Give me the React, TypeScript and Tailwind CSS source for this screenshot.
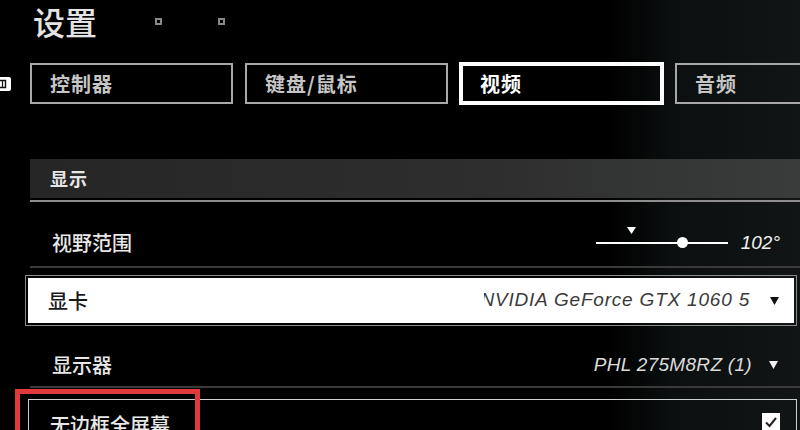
export default function App() {
  return (
    <div className="relative w-[800px] h-[430px] overflow-hidden bg-[linear-gradient(90deg,#000_0%,#000_76%,#0b0f0f_84%,#111515_100%)] text-[#e8e8e8] font-['Noto_Sans_CJK_SC','Liberation_Sans',sans-serif]">
      {/* Title */}
      <div className="h-[42px] flex items-center pl-[33px]">
        <div className="text-[32px] leading-none font-medium text-[#e4e4e4]">设置</div>
        <div className="ml-[58px] w-[7px] h-[7px] border-2 border-[#8a8a8a]" />
        <div className="ml-[56px] w-[7px] h-[7px] border-2 border-[#8a8a8a]" />
      </div>

      {/* Tabs */}
      <div className="mt-[21px] h-[41px] flex items-center">
        <div className="w-[11px] h-[14px] shrink-0 bg-white rounded-r-[2px] flex items-center overflow-hidden">
          <svg width="11" height="14" viewBox="0 0 11 14">
            <path d="M0 3.5 H5.5 V10.5 H0" fill="none" stroke="#111" strokeWidth="1.4" />
            <path d="M2.5 3.5 V10.5" stroke="#111" strokeWidth="1.2" />
          </svg>
        </div>
        <div className="ml-[19px] flex shrink-0 gap-[12px]">
          <div className="w-[203px] h-[41px] shrink-0 border-2 border-[#a8a8a8] flex items-center pl-[18px] text-[20px] font-bold text-[#c6c6c6] tracking-[1px]">控制器</div>
          <div className="w-[203px] h-[41px] shrink-0 border-2 border-[#a8a8a8] flex items-center pl-[18px] text-[20px] font-bold text-[#c6c6c6] tracking-[1px]">键盘/鼠标</div>
          <div className="w-[203px] h-[41px] shrink-0 border-[3px] border-white outline outline-1 outline-white flex items-center pl-[17px] text-[20px] font-bold text-white tracking-[1px]">视频</div>
          <div className="w-[203px] h-[41px] shrink-0 border-2 border-[#a8a8a8] flex items-center pl-[18px] text-[20px] font-bold text-[#c6c6c6] tracking-[1px]">音频</div>
        </div>
      </div>

      {/* Section */}
      <div className="mt-[55px] ml-[30px] w-[770px]">
        <div className="h-[39px] bg-[linear-gradient(90deg,#262626_0%,#2e2e2e_60%,#3a3c3c_100%)] flex items-center pl-[20px] text-[18px] font-bold tracking-[1px] text-[#e6e6e6]">显示</div>
        <div className="mt-[2px] h-[2px] bg-[#8e8e8e]" />

        {/* FOV */}
        <div className="h-[66px] pt-[18px] flex items-center justify-between pl-[22px] pr-[20px] border-b-2 border-[#3a3a3a]">
          <div className="text-[20px] font-medium">视野范围</div>
          <div className="flex items-center">
            <div className="relative w-[132px] h-[2px] bg-white">
              <div className="absolute left-[81px] top-[-5px] w-[11px] h-[11px] rounded-full bg-white" />
              <svg className="absolute left-[31px] top-[-15px]" width="9" height="7" viewBox="0 0 9 7">
                <path d="M0 0 H9 L4.5 7 Z" fill="#fff" />
              </svg>
            </div>
            <div className="ml-[13px] italic text-[19px] font-['Liberation_Sans',sans-serif] text-[#f0f0f0]">102°</div>
          </div>
        </div>

        {/* GPU selected */}
        <div className="mt-[7px] -ml-[5px] w-[772px] border border-[#8a8a8a] p-[2px]">
          <div className="h-[45px] bg-white flex items-center justify-between pl-[20px]">
            <div className="text-[20px] font-medium text-[#1a1a1a]">显卡</div>
            <div className="flex items-center">
              <div className="w-[266px] overflow-hidden flex justify-end whitespace-nowrap italic text-[19px] tracking-[0.8px] text-[#3a3a3a] font-['Liberation_Sans',sans-serif]">
                NVIDIA GeForce GTX 1060 5
              </div>
              <svg className="ml-[20px] mr-[15px]" width="9" height="8" viewBox="0 0 9 8">
                <path d="M0 0 H9 L4.5 8 Z" fill="#111" />
              </svg>
            </div>
          </div>
        </div>

        {/* Monitor */}
        <div className="h-[62px] pt-[18px] flex items-center justify-between pl-[22px] pr-[22px] border-b-2 border-[#3a3a3a]">
          <div className="text-[20px] font-medium">显示器</div>
          <div className="flex items-center">
            <div className="italic text-[19px] tracking-[0.3px] text-[#dcdcdc] font-['Liberation_Sans',sans-serif]">PHL 275M8RZ (1)</div>
            <svg className="ml-[17px]" width="9" height="8" viewBox="0 0 9 8">
              <path d="M0 0 H9 L4.5 8 Z" fill="#f0f0f0" />
            </svg>
          </div>
        </div>

        {/* Borderless */}
        <div className="mt-[11px] -ml-[2px] w-[769px] h-[60px] border-t border-x border-[#cfcfcf] flex items-start justify-between pl-[21px]">
          <div className="pt-[10px] text-[20px] font-medium">无边框全屏幕</div>
          <div className="mt-[13px] mr-[16px] w-[18px] h-[18px] bg-white flex items-center justify-center">
            <svg width="14" height="14" viewBox="0 0 14 14">
              <path d="M2 7.5 L5.5 11 L12 3" fill="none" stroke="#222" strokeWidth="2" />
            </svg>
          </div>
        </div>
      </div>

      {/* Red annotation */}
      <div className="absolute left-[15px] top-[389px] w-[185px] h-[60px] border-[5px] border-[#e23a3a]" />
    </div>
  );
}
